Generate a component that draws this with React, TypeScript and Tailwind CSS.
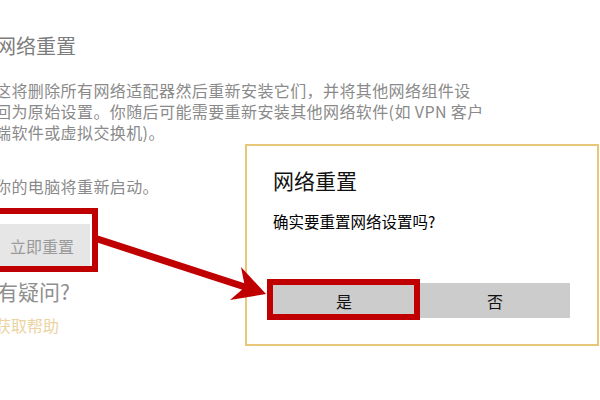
const font = { fontFamily: '"Noto Sans CJK SC", "Noto Sans", sans-serif' };

function Arrow() {
  // annotation arrow from the left frame to the dialog's "是" button
  return (
    <svg className="pointer-events-none absolute inset-0" width="600" height="400" viewBox="0 0 600 400">
      <line x1="96" y1="238.5" x2="248" y2="288" stroke="#c00000" strokeWidth="7" />
      <polygon points="266,294 241,267 245,287 230,300" fill="#c00000" />
    </svg>
  );
}

export default function App() {
  return (
    <div className="relative w-[600px] h-[400px] overflow-hidden bg-white" style={font}>
      <div className="ml-[-4px] pt-[32px] flex flex-col items-start">
        <h1 className="text-[20px] leading-[28px] text-[#7c7c7c] font-normal">网络重置</h1>
        <p className="mt-[20px] ml-[-1px] text-[16px] tracking-[0.4px] leading-[21px] text-[#8a8a8a] whitespace-nowrap">
          这将删除所有网络适配器然后重新安装它们，并将其他网络组件设
          <br />
          回为原始设置。你随后可能需要重新安装其他网络软件(如 VPN 客户
          <br />
          端软件或虚拟交换机)。
        </p>
        <p className="mt-[33px] ml-[-1px] text-[16px] tracking-[0.4px] leading-[21px] text-[#8a8a8a]">你的电脑将重新启动。</p>
        <div className="relative mt-[27px] ml-[-10px]">
          <button className="h-[43px] w-[104px] bg-[#e6e6e6] pl-[24px] text-left text-[16px] text-[#9a9a9a]">立即重置</button>
          <div className="absolute -top-[16px] -bottom-[5px] -left-[6px] -right-[8px] border-[6px] border-[#c00000]" />
        </div>
        <p className="mt-[10px] ml-[1px] text-[21px] leading-[28px] text-[#8f8f8f]">有疑问?</p>
        <a className="mt-[9px] ml-[-1px] text-[16px] leading-[22px] text-[#ebd3a2]">获取帮助</a>
      </div>

      <div className="absolute left-[245px] top-[144px] w-[354px] h-[202px] border-2 border-[#e8c878] bg-white pt-[20px]">
        <div className="pl-[26px]">
          <h2 className="text-[21px] leading-[28px] text-[#111]">网络重置</h2>
          <p className="mt-[16px] text-[15.5px] leading-[22px] font-normal text-[#000]">确实要重置网络设置吗?</p>
        </div>
        <div className="mt-[51px] ml-[21px] flex gap-[4px]">
          <div className="relative">
            <button className="h-[35px] w-[148px] bg-[#cccccc] pl-[4px] text-[16px] text-[#111]">是</button>
            <div className="absolute -top-[4px] -bottom-[2px] -left-[1px] -right-[4px] border-[6px] border-[#c00000]" />
          </div>
          <button className="h-[35px] w-[150px] bg-[#cccccc] text-[16px] text-[#111]">否</button>
        </div>
      </div>

      <Arrow />
    </div>
  );
}
